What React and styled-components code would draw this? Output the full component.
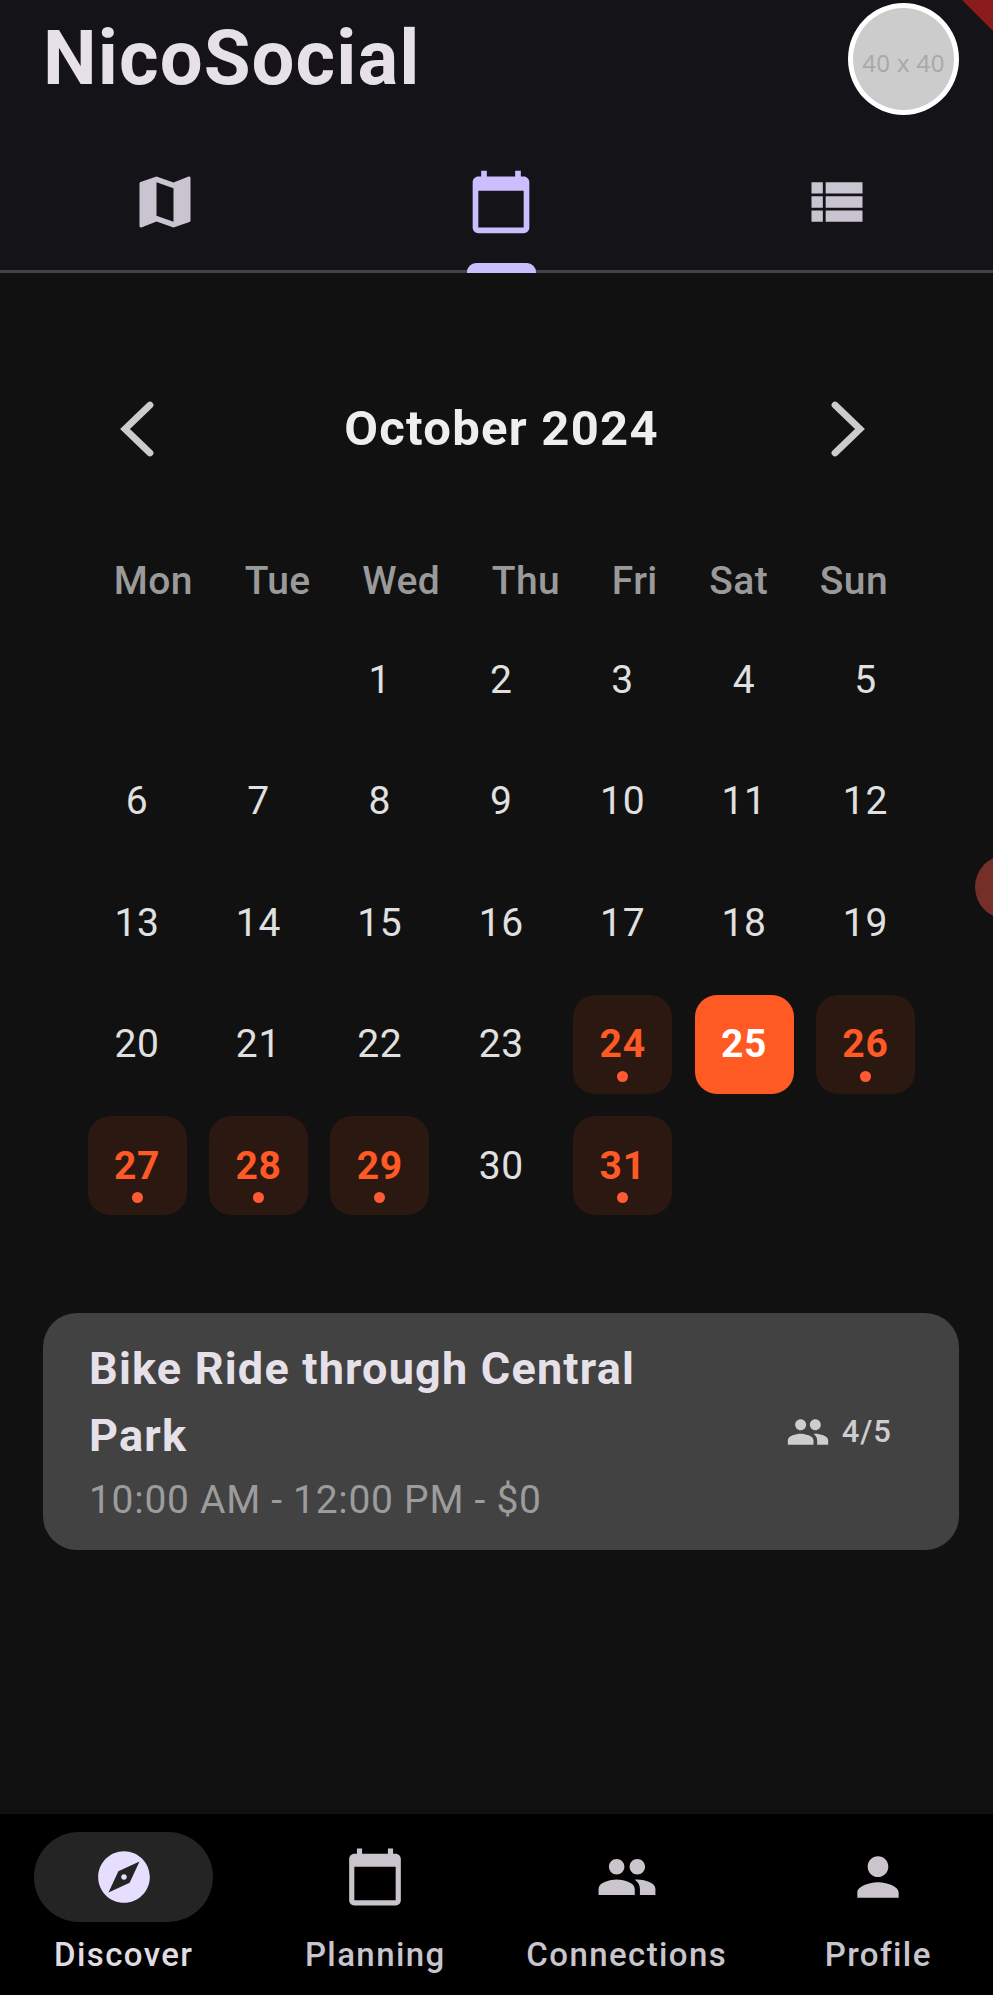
import React from 'react';
import styled, { createGlobalStyle } from 'styled-components';
import { MdMap, MdCalendarToday, MdViewList, MdExplore, MdPeople, MdPerson } from 'react-icons/md';

const GlobalStyle = createGlobalStyle`
  * { box-sizing: border-box; }
  html, body { margin: 0; padding: 0; background: #fff; }
  body { font-family: Roboto, "Liberation Sans", sans-serif; overflow: hidden; }
  button { font: inherit; color: inherit; background: none; border: 0; padding: 0; margin: 0; }
`;

const Screen = styled.div`
  position: relative;
  width: 993px;
  height: 1995px;
  overflow: hidden;
  display: flex;
  flex-direction: column;
  background: #111111;
  color: #e6e1e9;
`;

const Header = styled.header`
  flex: none;
  height: 273px;
  background: #141318;
  display: flex;
  flex-direction: column;
  justify-content: space-between;
  border-bottom: 3px solid #424147;
`;

const TitleBar = styled.div`
  display: flex;
  justify-content: space-between;
  align-items: flex-start;
  padding: 3px 34px 0 43px;
`;

const Brand = styled.h1`
  margin: 10px 0 0;
  font-size: 76px;
  line-height: 90px;
  font-weight: 700;
  letter-spacing: 1.1px;
`;

const Avatar = styled.div`
  width: 111px;
  height: 112px;
  border: 5px solid #fff;
  border-radius: 50%;
  background: #cccccc;
  color: #a8a8a8;
  display: flex;
  align-items: center;
  justify-content: center;
  padding-top: 8px;
  font: 400 24px/28px "Open Sans", sans-serif;
  letter-spacing: 0.4px;
  white-space: nowrap;
`;

const Tabs = styled.nav`
  display: flex;
  width: 1008px;
  height: 136px;
  margin: 0 0 -3px -3px;
`;

const Tab = styled.button`
  flex: 1;
  display: flex;
  flex-direction: column;
  align-items: center;
  justify-content: space-between;
  padding-top: 31px;
  color: ${({ $active }) => ($active ? '#cabeff' : '#c9c5d0')};
  svg { width: 68px; height: 68px; }
  &::after {
    content: '';
    width: 69px;
    height: 10px;
    border-radius: 9px 9px 0 0;
    background: ${({ $active }) => ($active ? '#cabeff' : 'transparent')};
  }
`;

const Main = styled.main`
  flex: 1;
  display: flex;
  flex-direction: column;
  padding: 114px 34px 0 43px;
`;

const MonthBar = styled.div`
  display: flex;
  align-items: center;
  justify-content: space-between;
  height: 84px;
  padding: 0 93px 0 76px;
`;

const Arrow = styled.button`
  display: flex;
  svg {
    width: 36px;
    height: 56px;
    fill: none;
    stroke: #cccccc;
    stroke-width: 6.8;
    stroke-linecap: round;
  }
`;

const Month = styled.h2`
  margin: 0 0 0 18px;
  font-size: 49px;
  line-height: 60px;
  font-weight: 700;
  letter-spacing: 1.25px;
  color: #eeeeee;
`;

const WeekRow = styled.div`
  display: flex;
  justify-content: space-around;
  margin: 87px 0 0;
  padding: 0 0 0 45px;
  width: 871px;
  font-size: 39px;
  line-height: 46px;
  font-weight: 500;
  letter-spacing: 0.4px;
  color: #9a9a9a;
`;

const DayGrid = styled.div`
  display: grid;
  grid-template-columns: repeat(7, 99px);
  grid-auto-rows: 99px;
  gap: 22.5px 22.4px;
  margin: 26px 0 0 44.6px;
`;

const dayTone = {
  plain: { bg: 'transparent', fg: '#e0e0e0', weight: 400 },
  event: { bg: '#2a1811', fg: '#ff5a26', weight: 700 },
  selected: { bg: '#ff5a24', fg: '#ffffff', weight: 700 },
};

const Day = styled.button`
  position: relative;
  display: flex;
  align-items: center;
  justify-content: center;
  border-radius: 22px;
  font-size: 39px;
  line-height: 46px;
  letter-spacing: 0.7px;
  background: ${({ $tone }) => dayTone[$tone].bg};
  color: ${({ $tone }) => dayTone[$tone].fg};
  font-weight: ${({ $tone }) => dayTone[$tone].weight};
`;

const Dot = styled.i`
  position: absolute;
  bottom: 12px;
  left: 44px;
  width: 11px;
  height: 11px;
  border-radius: 50%;
  background: #ff5a33;
`;

const EventCard = styled.article`
  display: flex;
  align-items: center;
  justify-content: space-between;
  margin-top: 98px;
  height: 237px;
  padding: 0 67px 0 46px;
  border-radius: 34px;
  background: #424242;
`;

const EventTitle = styled.h3`
  margin: 0;
  width: 600px;
  font-size: 45px;
  line-height: 67px;
  font-weight: 700;
  letter-spacing: 1.2px;
`;

const EventTime = styled.p`
  margin: 2px 0 0;
  font-size: 39px;
  line-height: 58px;
  letter-spacing: 0.7px;
  color: #9c9c9c;
`;

const Attendance = styled.div`
  display: flex;
  align-items: center;
  gap: 12px;
  font-size: 31px;
  font-weight: 500;
  letter-spacing: 1px;
  color: #cfcccf;
  svg { width: 44px; height: 44px; }
`;

const BottomNav = styled.nav`
  flex: none;
  display: flex;
  width: 1006px;
  height: 181px;
  margin-left: -2px;
  padding-top: 18px;
  background: #000;
`;

const NavItem = styled.button`
  flex: 1;
  display: flex;
  flex-direction: column;
  align-items: center;
  font-size: 33px;
  line-height: 40px;
  font-weight: 500;
  letter-spacing: 1.4px;
  color: ${({ $active }) => ($active ? '#e0dde2' : '#c9c5cc')};
`;

const Pill = styled.span`
  display: flex;
  align-items: center;
  justify-content: center;
  width: 179px;
  height: 90px;
  margin-bottom: 13px;
  border-radius: 46px;
  background: ${({ $active }) => ($active ? '#242424' : 'transparent')};
  color: ${({ $active }) => ($active ? '#e6deff' : '#cac5cd')};
  svg { width: 62px; height: 62px; }
`;

const Ribbon = styled.div`
  position: absolute;
  top: 0;
  right: 0;
  width: 31px;
  height: 31px;
  background: #8b1a1c;
  clip-path: polygon(0 0, 100% 0, 100% 100%);
`;

const EdgeBubble = styled.div`
  position: absolute;
  top: 855px;
  left: 975px;
  width: 64px;
  height: 64px;
  border-radius: 50%;
  background: #743028;
`;

const WEEKDAYS = ['Mon', 'Tue', 'Wed', 'Thu', 'Fri', 'Sat', 'Sun'];
const EVENT_DAYS = [24, 26, 27, 28, 29, 31];
const SELECTED = 25;
const DAYS = Array.from({ length: 31 }, (_, i) => i + 1);

const NAV = [
  { label: 'Discover', Icon: MdExplore, active: true },
  { label: 'Planning', Icon: MdCalendarToday },
  { label: 'Connections', Icon: MdPeople },
  { label: 'Profile', Icon: MdPerson },
];

const toneOf = (day) =>
  day === SELECTED ? 'selected' : EVENT_DAYS.includes(day) ? 'event' : 'plain';

export default function App() {
  return (
    <>
      <GlobalStyle />
      <Screen>
        <Header>
          <TitleBar>
            <Brand>NicoSocial</Brand>
            <Avatar>40 x 40</Avatar>
          </TitleBar>
          <Tabs>
            <Tab aria-label="Map"><MdMap /></Tab>
            <Tab aria-label="Calendar" $active><MdCalendarToday /></Tab>
            <Tab aria-label="List"><MdViewList /></Tab>
          </Tabs>
        </Header>
        <Main>
          <MonthBar>
            <Arrow aria-label="Previous month">
              <svg viewBox="0 0 36 56"><path d="M31 4 6 28l25 24" /></svg>
            </Arrow>
            <Month>October 2024</Month>
            <Arrow aria-label="Next month">
              <svg viewBox="0 0 36 56"><path d="M5 4l25 24L5 52" /></svg>
            </Arrow>
          </MonthBar>
          <WeekRow>
            {WEEKDAYS.map((d) => <span key={d}>{d}</span>)}
          </WeekRow>
          <DayGrid>
            <span />
            <span />
            {DAYS.map((d) => (
              <Day key={d} $tone={toneOf(d)}>
                {d}
                {EVENT_DAYS.includes(d) && <Dot />}
              </Day>
            ))}
          </DayGrid>
          <EventCard>
            <div>
              <EventTitle>Bike Ride through Central Park</EventTitle>
              <EventTime>10:00 AM - 12:00 PM - $0</EventTime>
            </div>
            <Attendance><MdPeople />4/5</Attendance>
          </EventCard>
        </Main>
        <BottomNav>
          {NAV.map(({ label, Icon, active }) => (
            <NavItem key={label} $active={active}>
              <Pill $active={active}><Icon /></Pill>
              {label}
            </NavItem>
          ))}
        </BottomNav>
        <Ribbon />
        <EdgeBubble />
      </Screen>
    </>
  );
}
